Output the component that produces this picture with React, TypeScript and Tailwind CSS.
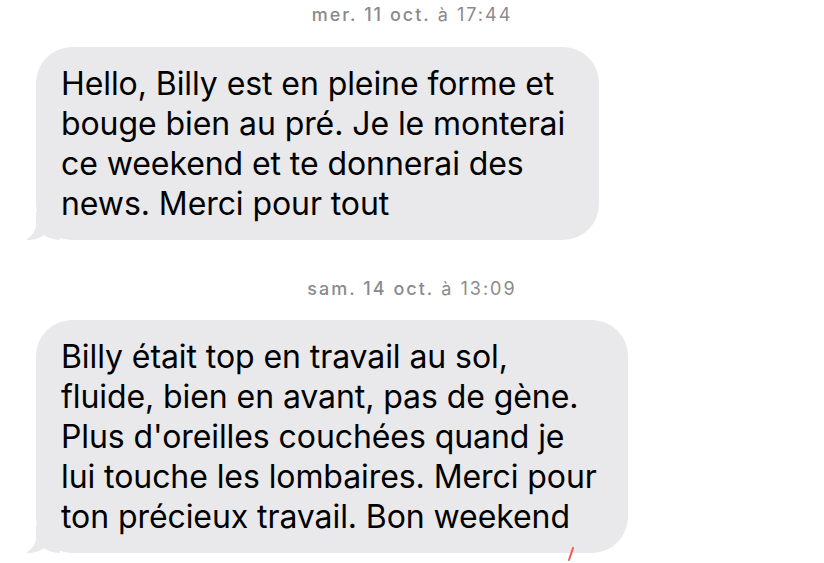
import React from 'react'

const bubbleText = "text-[32px] leading-[40px] text-black tracking-[-0.08px]"

function Tail() {
    return (
        <svg className="absolute left-[-10px] bottom-0" width="34" height="28" viewBox="0 0 34 28">
            <path d="M10 0 L10 12 C10 19 6 24 0 28 C8 28 14 26 18 23 C22 26 27 27.5 34 28 L34 0 Z" fill="#e9e9eb" />
        </svg>
    )
}

function Stamp({ day, time }: { day: string; time: string }) {
    return (
        <div className="text-center text-[18px] leading-[24px] tracking-[2px] text-[#8a8a8e]">
            <span className="font-medium">{day}</span> <span>{time}</span>
        </div>
    )
}

function Bubble({ lines, width }: { lines: string[]; width: string }) {
    return (
        <div className={`relative ml-[36px] ${width}`}>
            <Tail />
            <div className={`relative bg-[#e9e9eb] rounded-[36px] pl-[25px] pt-[17px] pb-[16px] ${bubbleText}`}>
                {lines.map((l, i) => (
                    <div key={i} className="whitespace-nowrap">{l}</div>
                ))}
            </div>
        </div>
    )
}

export default function App(): React.JSX.Element {
    return (
        <div className="w-[824px] h-[563px] bg-white overflow-hidden relative" style={{ fontFamily: 'Inter, "Noto Sans", sans-serif' }}>
            <div className="pt-[3px]">
                <Stamp day="mer. 11 oct." time="à 17:44" />
            </div>
            <div className="mt-[20px]">
                <Bubble
                    width="w-[563px]"
                    lines={[
                        'Hello, Billy est en pleine forme et',
                        'bouge bien au pré. Je le monterai',
                        'ce weekend et te donnerai des',
                        'news. Merci pour tout',
                    ]}
                />
            </div>
            <div className="mt-[37px]">
                <Stamp day="sam. 14 oct." time="à 13:09" />
            </div>
            <div className="mt-[19px]">
                <Bubble
                    width="w-[592px]"
                    lines={[
                        'Billy était top en travail au sol,',
                        'fluide, bien en avant, pas de gène.',
                        "Plus d'oreilles couchées quand je",
                        'lui touche les lombaires. Merci pour',
                        'ton précieux travail. Bon weekend',
                    ]}
                />
            </div>
            <svg className="absolute left-[567px] top-[547px]" width="8" height="14" viewBox="0 0 8 14">
                <path d="M6 1 L4 7 L2 13" stroke="#f05a50" strokeWidth="2" fill="none" strokeLinecap="round" />
            </svg>
        </div>
    )
}
